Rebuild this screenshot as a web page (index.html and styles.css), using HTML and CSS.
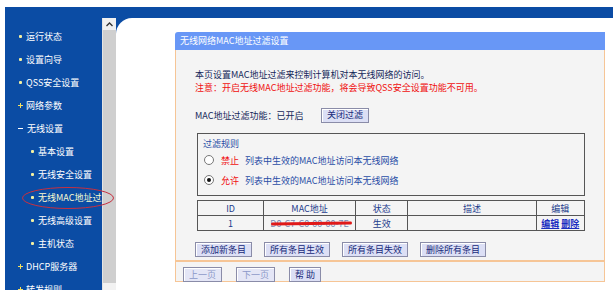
FILE: index.html
```html
<!DOCTYPE html>
<html lang="zh-CN">
<head>
  <meta charset="UTF-8">
  <title>无线网络MAC地址过滤设置</title>
  <link rel="stylesheet" href="styles.css">
</head>
<body>

<div id="frame">
  <div id="top-bar"></div>
  <div id="main">
    <ul id="nav">
      <li class="item"><span class="dot"></span>运行状态</li>
      <li class="item"><span class="dot"></span>设置向导</li>
      <li class="item"><span class="dot"></span>QSS安全设置</li>
      <li class="item"><span class="plus"></span>网络参数</li>
      <li class="item"><span class="minus"></span>无线设置</li>
      <li class="item sub"><span class="dot"></span>基本设置</li>
      <li class="item sub"><span class="dot"></span>无线安全设置</li>
      <li class="item sub active"><span class="dot"></span>无线MAC地址过滤</li>
      <li class="item sub"><span class="dot"></span>无线高级设置</li>
      <li class="item sub"><span class="dot"></span>主机状态</li>
      <li class="item"><span class="plus"></span>DHCP服务器</li>
      <li class="item"><span class="plus"></span>转发规则</li>
    </ul>

    <div id="scrollbar">
      <div class="scroll-up">
        <svg width="7" height="5" viewBox="0 0 7 5"><path d="M0.5 4 L3.5 1 L6.5 4" fill="none" stroke="#333" stroke-width="1.3"/></svg>
      </div>
      <div class="scroll-track"></div>
    </div>

    <div id="content">
      <div class="panel">
        <div class="panel-title">无线网络MAC地址过滤设置</div>
        <div class="panel-body">
          <p class="intro">本页设置MAC地址过滤来控制计算机对本无线网络的访问。<br>
            <span class="warn">注意：开启无线MAC地址过滤功能，将会导致QSS安全设置功能不可用。</span></p>

          <div class="status">
            <span class="status-label">MAC地址过滤功能：已开启</span>
            <button class="button">关闭过滤</button>
          </div>

          <div class="rules">
            <div class="rules-title">过滤规则</div>
            <label class="rule"><span class="radio"></span><span class="red">禁止</span>列表中生效的MAC地址访问本无线网络</label>
            <label class="rule"><span class="radio checked"></span><span class="red">允许</span>列表中生效的MAC地址访问本无线网络</label>
          </div>

          <table class="list">
            <tr>
              <th class="c-id">ID</th>
              <th class="c-mac">MAC地址</th>
              <th class="c-state">状态</th>
              <th class="c-desc">描述</th>
              <th class="c-edit">编辑</th>
            </tr>
            <tr>
              <td>1</td>
              <td class="mac">D0-C7-C0-00-00-7E</td>
              <td>生效</td>
              <td></td>
              <td><a href="#">编辑</a> <a href="#">删除</a></td>
            </tr>
          </table>

          <div class="actions">
            <button class="button">添加新条目</button>
            <button class="button">所有条目生效</button>
            <button class="button">所有条目失效</button>
            <button class="button">删除所有条目</button>
          </div>
        </div>
        <div class="panel-foot">
          <button class="button" disabled>上一页</button>
          <button class="button" disabled>下一页</button>
          <button class="button">帮 助</button>
        </div>
      </div>
    </div>

    <svg id="mark" width="94" height="24" viewBox="0 0 94 24">
      <ellipse cx="47" cy="12" rx="45.5" ry="10.5" fill="none" stroke="#c83040" stroke-width="1"/>
    </svg>
  </div>
</div>

</body>
</html>
```

FILE: styles.css
```css
body {
  margin: 0;
  background-color: #fff;
  font-family: "Noto Sans CJK SC", "DejaVu Sans", sans-serif;
  font-size: 9px;
  color: #14285a;
  overflow: hidden;
  height: 290px;
}

#frame {
  margin: 7px 0 0 5px;
  width: 608px;
}

#top-bar {
  height: 11px;
  background-color: #0b4ca4;
}

#main {
  position: relative;
  display: flex;
  height: 272px;
  background-color: #0b4ca4;
}

/* left menu */
#nav {
  list-style: none;
  margin: 0;
  padding: 7px 0 0 0;
  width: 97px;
  flex-shrink: 0;
  overflow: hidden;
  color: #fff;
}

.item {
  display: flex;
  align-items: center;
  height: 23px;
  padding-left: 13px;
  white-space: nowrap;
}

.item.sub {
  padding-left: 25px;
}

.item.active {
  color: #fbfbd0;
}

.dot,
.plus,
.minus {
  flex-shrink: 0;
}

.dot {
  width: 3px;
  height: 3px;
  margin: 0 4px 0 1px;
  background-color: #f4f0a0;
  border-radius: 1px;
}

.plus {
  position: relative;
  width: 5px;
  height: 5px;
  margin-right: 3px;
}

.plus::before,
.plus::after {
  content: "";
  position: absolute;
  background-color: #f4e060;
}

.plus::before {
  left: 0;
  top: 2px;
  width: 5px;
  height: 1px;
}

.plus::after {
  left: 2px;
  top: 0;
  width: 1px;
  height: 5px;
}

.minus {
  width: 5px;
  height: 1px;
  margin-right: 4px;
  background-color: #fff;
}

#mark {
  position: absolute;
  left: 16px;
  top: 168px;
}

/* fake scrollbar */
#scrollbar {
  width: 13px;
  flex-shrink: 0;
  display: flex;
  flex-direction: column;
  border-left: 1px solid #e4e4e4;
  background-color: #f2f2f2;
}

.scroll-up {
  height: 12px;
  display: flex;
  align-items: center;
  justify-content: center;
  background-color: #f0f0f0;
}

.scroll-track {
  height: 253px;
  background-color: #cfcfcf;
}

/* content */
#content {
  flex: 1;
  background-color: #fff;
  border-top-left-radius: 16px;
  padding: 14px 0 0 59px;
}

.panel {
  width: 430px;
}

.panel-title {
  height: 18px;
  line-height: 18px;
  padding-left: 5px;
  color: #fff;
  background-color: #6897f6;
  border-top-left-radius: 3px;
}

.panel-body {
  background-color: #f4f4f4;
  border: 1px solid #f6c596;
  border-top: none;
  padding: 0 19px 3px 19px;
}

.intro {
  margin: 0;
  padding-top: 18px;
  line-height: 13px;
}

.warn,
.red {
  color: #f01010;
}

.status {
  display: flex;
  align-items: center;
  margin-top: 13px;
  height: 16px;
}

.status-label {
  width: 126px;
}

.rules {
  margin: 10px 0 0 2px;
  height: 63px;
  box-sizing: border-box;
  border: 1px solid #555;
  padding: 3px 0 0 5px;
}

.rules-title {
  line-height: 13px;
  color: #2a4ea6;
}

.rule {
  display: flex;
  align-items: center;
  height: 20px;
  color: #2a4ea6;
}

.rule .red {
  margin-right: 6px;
}

.radio {
  width: 8px;
  height: 8px;
  margin: 0 7px 0 1px;
  border: 1px solid #777;
  border-radius: 50%;
  background-color: #fff;
  display: flex;
  align-items: center;
  justify-content: center;
}

.radio.checked::after {
  content: "";
  width: 4px;
  height: 4px;
  border-radius: 50%;
  background-color: #111;
}

.list {
  margin: 4px 0 0 2px;
  width: 388px;
  border-collapse: collapse;
  border: 1px solid #555;
}

.list th,
.list td {
  height: 14px;
  padding: 0;
  border: 1px solid #555;
  text-align: center;
  font-weight: normal;
  color: #1c3b8c;
  line-height: 13px;
}

.c-id { width: 66px; }
.c-mac { width: 92px; }
.c-state { width: 52px; }
.c-desc { width: 129px; }
.c-edit { width: 48px; }

.list td.mac {
  position: relative;
  color: #7a86b0;
}

.list td.mac::after {
  content: "";
  position: absolute;
  left: 7px;
  right: 3px;
  top: 6px;
  height: 3px;
  border-radius: 2px;
  background-color: #e01818;
  transform: rotate(-0.8deg);
}

.list a {
  color: #1a2cc0;
  font-weight: bold;
}

.actions {
  display: flex;
  gap: 12px;
  margin-top: 11px;
}

.button {
  height: 15px;
  padding: 0 5px;
  font-family: inherit;
  font-size: 9px;
  line-height: 12px;
  color: #172a7a;
  background-color: #dcdff5;
  border: 1px solid;
  border-color: #e8eaff #444 #444 #e8eaff;
  outline: 1px solid #8a8ca8;
  outline-offset: -1px;
  box-shadow: inset 1px 1px 0 #fff;
  cursor: pointer;
}

.button:disabled {
  color: #8c98c8;
  background-color: #e4e6f6;
}

.panel-foot {
  display: flex;
  gap: 14px;
  height: 21px;
  box-sizing: border-box;
  padding: 5px 0 0 7px;
  background-color: #f4f4f4;
  border: 1px solid #f6c596;
}
```
